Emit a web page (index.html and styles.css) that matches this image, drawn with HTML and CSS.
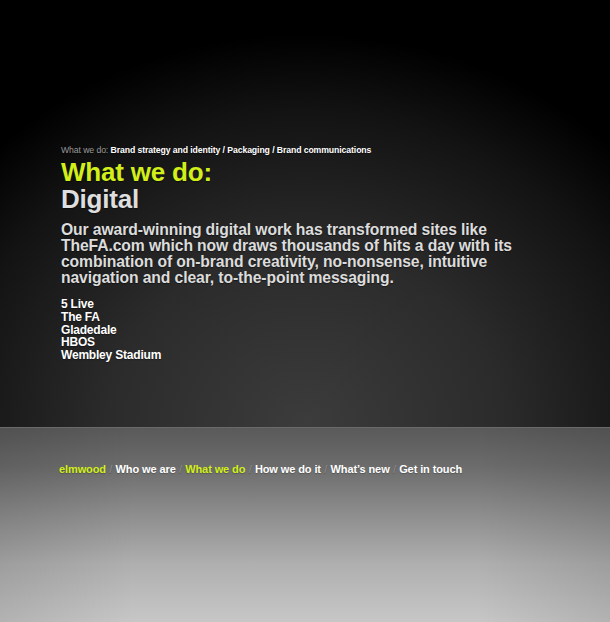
FILE: index.html
```html
<!DOCTYPE html>
<html lang="en">
<head>
<meta charset="utf-8">
<title>Elmwood – What we do: Digital</title>
<link rel="stylesheet" href="styles.css">
</head>
<body>
<div class="page">
  <section class="stage">
    <div class="content">
      <p class="crumbs"><span class="crumbs-label">What we do:</span> <a href="#">Brand strategy and identity</a> / <a href="#">Packaging</a> / <a href="#">Brand communications</a></p>
      <h1 class="title"><span class="title-section">What we do:</span><span class="title-page">Digital</span></h1>
      <p class="intro">Our award-winning digital work has transformed sites like TheFA.com which now draws thousands of hits a day with its combination of on-brand creativity, no-nonsense, intuitive navigation and clear, to-the-point messaging.</p>
      <ul class="clients">
        <li>5 Live</li>
        <li>The FA</li>
        <li>Gladedale</li>
        <li>HBOS</li>
        <li>Wembley Stadium</li>
      </ul>
    </div>
  </section>
  <section class="floor">
    <nav class="nav">
      <a class="nav-link is-brand" href="#">elmwood</a><span class="sep">/</span><a class="nav-link" href="#">Who we are</a><span class="sep">/</span><a class="nav-link is-active" href="#">What we do</a><span class="sep">/</span><a class="nav-link" href="#">How we do it</a><span class="sep">/</span><a class="nav-link" href="#">What’s new</a><span class="sep">/</span><a class="nav-link" href="#">Get in touch</a>
    </nav>
  </section>
</div>
</body>
</html>
```

FILE: styles.css
```css
html, body {
  margin: 0;
  padding: 0;
  background: #000;
}
body {
  font-family: "Liberation Sans", Arial, sans-serif;
  font-weight: bold;
}
.page {
  width: 610px;
  height: 622px;
  display: flex;
  flex-direction: column;
  overflow: hidden;
}
.stage {
  height: 427px;
  flex: none;
  background:
    radial-gradient(ellipse 72% 92% at 50% 100%, #3c3c3c 0%, #2b2b2b 45%, #131313 80%, #000 100%),
    #000;
}
.content {
  padding: 145px 0 0 61px;
  text-shadow: 0 1px 1px rgba(0,0,0,0.45);
}
.crumbs {
  margin: 0;
  font-size: 8.7px;
  line-height: 10px;
  color: #fff;
  letter-spacing: -0.1px;
}
.crumbs-label {
  color: #9a9a9a;
  font-weight: normal;
}
.crumbs a {
  color: #fff;
  text-decoration: none;
}
.title {
  margin: 4px 0 0;
  font-size: 26px;
  line-height: 27px;
  letter-spacing: -0.2px;
  display: flex;
  flex-direction: column;
}
.title-section {
  color: #d2ef1a;
}
.title-page {
  color: #dedede;
}
.intro {
  margin: 9px 0 0;
  width: 470px;
  font-size: 15.7px;
  line-height: 16.1px;
  color: #dcdcdc;
  letter-spacing: -0.1px;
}
.clients {
  list-style: none;
  margin: 12px 0 0;
  padding: 0;
  font-size: 12px;
  line-height: 12.6px;
  color: #fff;
  letter-spacing: -0.2px;
}
.floor {
  flex: 1;
  border-top: 1px solid #6a6a6a;
  background:
    linear-gradient(90deg, rgba(0,0,0,0.1) 0%, rgba(0,0,0,0) 22%, rgba(0,0,0,0) 78%, rgba(0,0,0,0.1) 100%),
    linear-gradient(180deg, #5a5a5a 0%, #6c6c6c 20%, #8e8e8e 45%, #afafaf 70%, #c7c7c7 100%);
}
.nav {
  padding: 35px 0 0 59px;
  font-size: 11px;
  line-height: 13px;
  letter-spacing: -0.1px;
  white-space: nowrap;
  text-shadow: 0 1px 1px rgba(0,0,0,0.25);
}
.nav-link {
  color: #fff;
  text-decoration: none;
}
.nav-link.is-brand,
.nav-link.is-active {
  color: #d2ef1a;
}
.sep {
  color: #8e8e8e;
  font-weight: normal;
  margin: 0 3.3px;
}
```
